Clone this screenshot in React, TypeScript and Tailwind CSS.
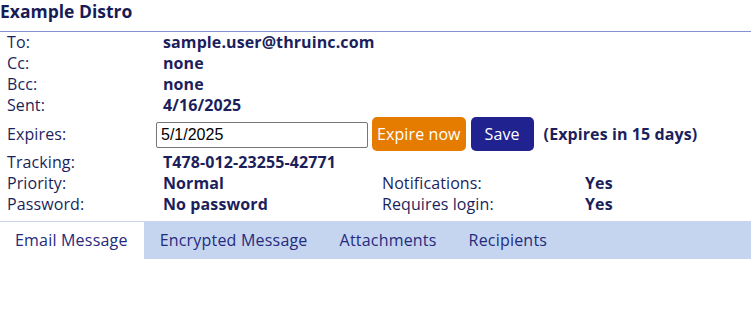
import React from 'react';

const tabs = ['Email Message', 'Encrypted Message', 'Attachments', 'Recipients'];

const Row: React.FC<{ label: string; value?: React.ReactNode; label2?: string; value2?: string }> = ({
  label,
  value,
  label2,
  value2
}) => (
  <div className="grid grid-cols-[156px_219px_203px_1fr] h-[21px] leading-[21px] items-center">
    <div className="pl-[7px]">{label}</div>
    <div className="pl-[7px] font-bold">{value}</div>
    {label2 && <div className="pl-[7px]">{label2}</div>}
    {value2 && <div className="pl-[7px] font-bold">{value2}</div>}
  </div>
);

export default function App() {
  return (
    <div className="w-[751px] h-[317px] bg-white font-['Open_Sans',sans-serif] text-[16px] tracking-[0.1px] text-[#1c1f5c]">
      <div className="h-[32px] border-b border-[#8491cc] font-bold text-[17.5px] tracking-normal leading-[22px] text-[#181c56]">
        Example Distro
      </div>

      <Row label="To:" value="sample.user@thruinc.com" />
      <Row label="Cc:" value="none" />
      <Row label="Bcc:" value="none" />
      <Row label="Sent:" value="4/16/2025" />

      <div className="flex items-center h-[36px] leading-[21px]">
        <div className="w-[156px] pl-[7px]">Expires:</div>
        <input
          defaultValue="5/1/2025"
          className="mt-[2px] w-[212px] h-[26px] border border-[#767676] rounded-[2px] px-[4px] text-[16px] tracking-normal text-black font-['Liberation_Sans',sans-serif] outline-none"
        />
        <button className="ml-[4px] h-[34px] px-[5px] rounded-[5px] bg-[#e57c00] text-white text-[16px]">
          Expire now
        </button>
        <button className="ml-[5px] h-[34px] w-[63px] rounded-[5px] bg-[#1f228f] text-white text-[16px]">
          Save
        </button>
        <span className="ml-[10px] font-bold">(Expires in 15 days)</span>
      </div>

      <Row label="Tracking:" value="T478-012-23255-42771" />
      <Row label="Priority:" value="Normal" label2="Notifications:" value2="Yes" />
      <Row label="Password:" value="No password" label2="Requires login:" value2="Yes" />

      <div className="mt-[6px] flex h-[38px] border-t border-[#cbd4ec] bg-[#c5d5f0]">
        {tabs.map((t, i) => (
          <div
            key={t}
            className={`flex items-center pb-[2px] text-[16px] tracking-[0.2px] text-[#252a7c] ${
              i === 0 ? 'bg-white pl-[15px] pr-[16px]' : 'px-[16px]'
            }`}
          >
            {t}
          </div>
        ))}
      </div>
    </div>
  );
}
